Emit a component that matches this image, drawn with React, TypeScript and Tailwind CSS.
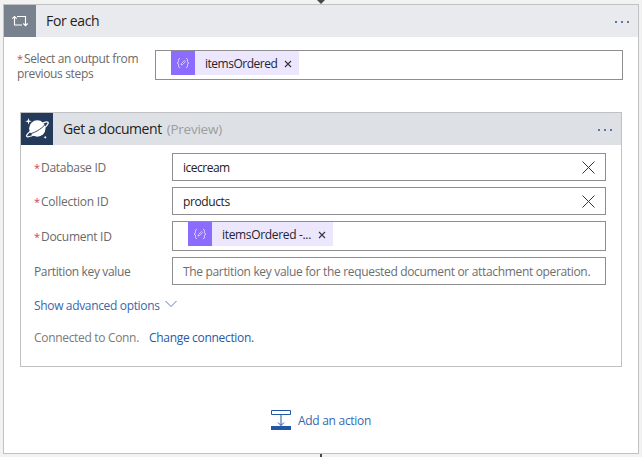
import React from "react";

function Dots() {
  return (
    <div className="flex gap-[4px] pt-px">
      <span className="size-[2px] bg-[#5f76a8]" />
      <span className="size-[2px] bg-[#5f76a8]" />
      <span className="size-[2px] bg-[#5f76a8]" />
    </div>
  );
}

function LoopIcon() {
  return (
    <svg className="size-8 shrink-0 bg-[#78828f]" viewBox="0 0 32 32" fill="none" stroke="#fff" strokeWidth="1.100">
      <path d="M10.500 11.500v8.500h7.500M13 11.500h8.500v9M8.300 13.700l2.200-2.200 2.200 2.200M19.300 18.500l2.200 2.200 2.200-2.200" />
    </svg>
  );
}

function PlanetIcon() {
  return (
    <svg className="size-8 shrink-0 bg-[#243a5a]" viewBox="0 0 32 32" fill="none">
      <circle cx="16.300" cy="15.500" r="8.200" fill="#fff" />
      <path d="M9.200 18.600C6.300 20.900 5 22.700 5.700 23.400C6.900 24.600 12.600 22.700 18.500 18.700C24.200 14.800 28 10.700 27.100 9.400C26.500 8.600 24.800 8.800 21.900 10.100" stroke="#fff" strokeWidth="1.300" />
      <path d="M8.600 20.900C11.600 20.400 15.300 18.600 18.700 16.300C21 14.700 22.800 13.100 23.800 11.800" stroke="#243a5a" strokeWidth=".9" />
      <path d="M7.500 5l.8 2.500 2.500.8-2.500.8-.8 2.500-.8-2.500-2.500-.8 2.500-.8z" fill="#fff" />
      <path d="M24.200 22.700l.5 1.100 1.100.5-1.100.5-.5 1.100-.5-1.100-1.100-.5 1.100-.5z" fill="#fff" />
    </svg>
  );
}

function Token({ children }: { children: React.ReactNode }) {
  return (
    <div className="flex h-6 bg-[#ede7fd] pr-[7px] text-[#25232f]">
      <svg className="size-6 shrink-0 bg-[#8c6cff]" viewBox="0 0 24 24" fill="none" stroke="#e6deff" strokeWidth="1">
        <path d="M9 7.500c-1.500 0-1.500.7-1.500 2s0 2-1.300 2.500c1.300.5 1.300 1.200 1.300 2.500s0 2 1.500 2M15 7.500c1.500 0 1.500.7 1.500 2s0 2 1.300 2.500c-1.300.5-1.300 1.200-1.300 2.500s0 2-1.500 2" />
        <path d="M10 14l.4-1.500 3-3 1.100 1.100-3 3z" strokeWidth=".8" />
      </svg>
      <div className="flex items-center pt-[2px] pl-[10px]">{children}</div>
      <svg className="mt-[9px] ml-[7px] size-2 shrink-0" viewBox="0 0 8 8" stroke="#33313c" strokeWidth="1.100">
        <path d="M1 1l6 6M7 1l-6 6" />
      </svg>
    </div>
  );
}

function ClearIcon() {
  return (
    <svg className="mr-[10px] ml-auto size-[13px]" viewBox="0 0 13 13" stroke="#333" strokeWidth="1">
      <path d="M.5.5l12 12M12.500.5l-12 12" />
    </svg>
  );
}

function Star() {
  return <span className="mr-[2px] inline-block w-[5px] text-[11px] leading-[12px] text-[#d0444c]">*</span>;
}

const field = "flex w-[434px] border border-[#8e8e90] bg-white text-[#222]";
const label = "w-[138px] shrink-0 pt-[2px] text-[#6a6a6a]";

export default function App() {
  return (
    <div className="relative flex h-[457px] w-[642px] flex-col overflow-hidden bg-[#f2f2f2] pt-[4px] pl-[3px] font-['Open_Sans','Liberation_Sans',sans-serif] text-[12px] leading-[20px] whitespace-nowrap">
      <svg className="absolute top-0 left-[316px] h-[4px] w-[10px]" viewBox="0 0 10 4">
        <path d="M1 0h8L5 4z" fill="#484848" />
      </svg>
      <div className="absolute top-[454px] left-[320px] h-[3px] w-[2px] bg-[#484848]" />

      <section className="flex h-[450px] w-[636px] flex-col border border-[#c0c1c3] bg-white">
        <header className="flex h-8 shrink-0 items-center bg-[#e9eaee] pr-[9px]">
          <LoopIcon />
          <h1 className="ml-[10px] flex-1 text-[14px] tracking-[-0.336px] text-[#222]">For each</h1>
          <Dots />
        </header>

        <div className="mt-[13px] flex h-[30px] shrink-0">
          <p className="ml-[13px] w-[138px] shrink-0 pt-px leading-[15px] tracking-[-0.355px] text-[#6a6a6a]">
            <Star />Select an output from<br />previous steps
          </p>
          <div className="flex h-[30px] w-[468px] border border-[#8e8e90] pl-[15px]">
            <Token><span className="tracking-[-0.485px]">itemsOrdered</span></Token>
          </div>
        </div>

        <section className="mt-[32px] ml-[16px] flex h-[255px] w-[602px] shrink-0 flex-col border border-[#c0c1c3] bg-white">
          <header className="flex h-8 shrink-0 items-center bg-[#dde1e5] pr-[9px]">
            <PlanetIcon />
            <h2 className="ml-[10px] flex-1 text-[14px] text-[#222]">
              <span className="tracking-[-0.43px]">Get a document</span>
              <span className="ml-[5px] text-[13.5px] tracking-[-0.25px] text-[#9b9da0]">(Preview)</span>
            </h2>
            <Dots />
          </header>

          <div className="mt-[8px] flex flex-col gap-[6px] pl-[13px]">
            <div className="flex items-center">
              <div className={label}><Star /><span className="tracking-[-0.276px]">Database ID</span></div>
              <div className={`${field} h-7 items-center pl-[10px]`}>
                <span className="pt-px tracking-[-0.5px]">icecream</span>
                <ClearIcon />
              </div>
            </div>
            <div className="flex items-center">
              <div className={label}><Star /><span className="tracking-[-0.223px]">Collection ID</span></div>
              <div className={`${field} h-7 items-center pl-[10px]`}>
                <span className="pt-px tracking-[-0.384px]">products</span>
                <ClearIcon />
              </div>
            </div>
            <div className="flex items-center">
              <div className={label}><Star /><span className="tracking-[-0.279px]">Document ID</span></div>
              <div className={`${field} h-[30px] pl-[15px]`}>
                <Token><span className="tracking-[-0.329px]">itemsOrdered -...</span></Token>
              </div>
            </div>
            <div className="flex items-center">
              <div className={label}><span className="tracking-[-0.351px]">Partition key value</span></div>
              <div className={`${field} h-7 items-center pl-[10px]`}>
                <span className="pt-px tracking-[-0.333px] text-[#6e6e6e]">The partition key value for the requested document or attachment operation.</span>
              </div>
            </div>
          </div>

          <div className="mt-[11px] flex pl-[13px] text-[#3a66ad]">
            <span className="tracking-[-0.34px]">Show advanced options</span>
            <svg className="mt-[4px] ml-[5px] h-[8px] w-[12px]" viewBox="0 0 12 8" fill="none" stroke="#5b7fb8">
              <path d="M.5 1l5.500 5.500 5.500-5.500" />
            </svg>
          </div>
          <div className="mt-[12px] flex pl-[13px]">
            <span className="w-[115px] tracking-[-0.32px] text-[#7a7a7a]">Connected to Conn.</span>
            <span className="tracking-[-0.316px] text-[#2b58a5]">Change connection.</span>
          </div>
        </section>

        <div className="mt-[43px] flex pl-[267px]">
          <svg className="size-5" viewBox="0 0 20 20" fill="none" stroke="#2456a6">
            <path d="M.5.5h19v4H.5z" />
            <path d="M10 5v10.500M7 12.500l3 3 3-3" />
            <path d="M0 16h20v4H0z" fill="#2456a6" stroke="none" />
          </svg>
          <span className="ml-[7px] pt-px tracking-[-0.290px] text-[#3a66ad]">Add an action</span>
        </div>
      </section>
    </div>
  );
}
